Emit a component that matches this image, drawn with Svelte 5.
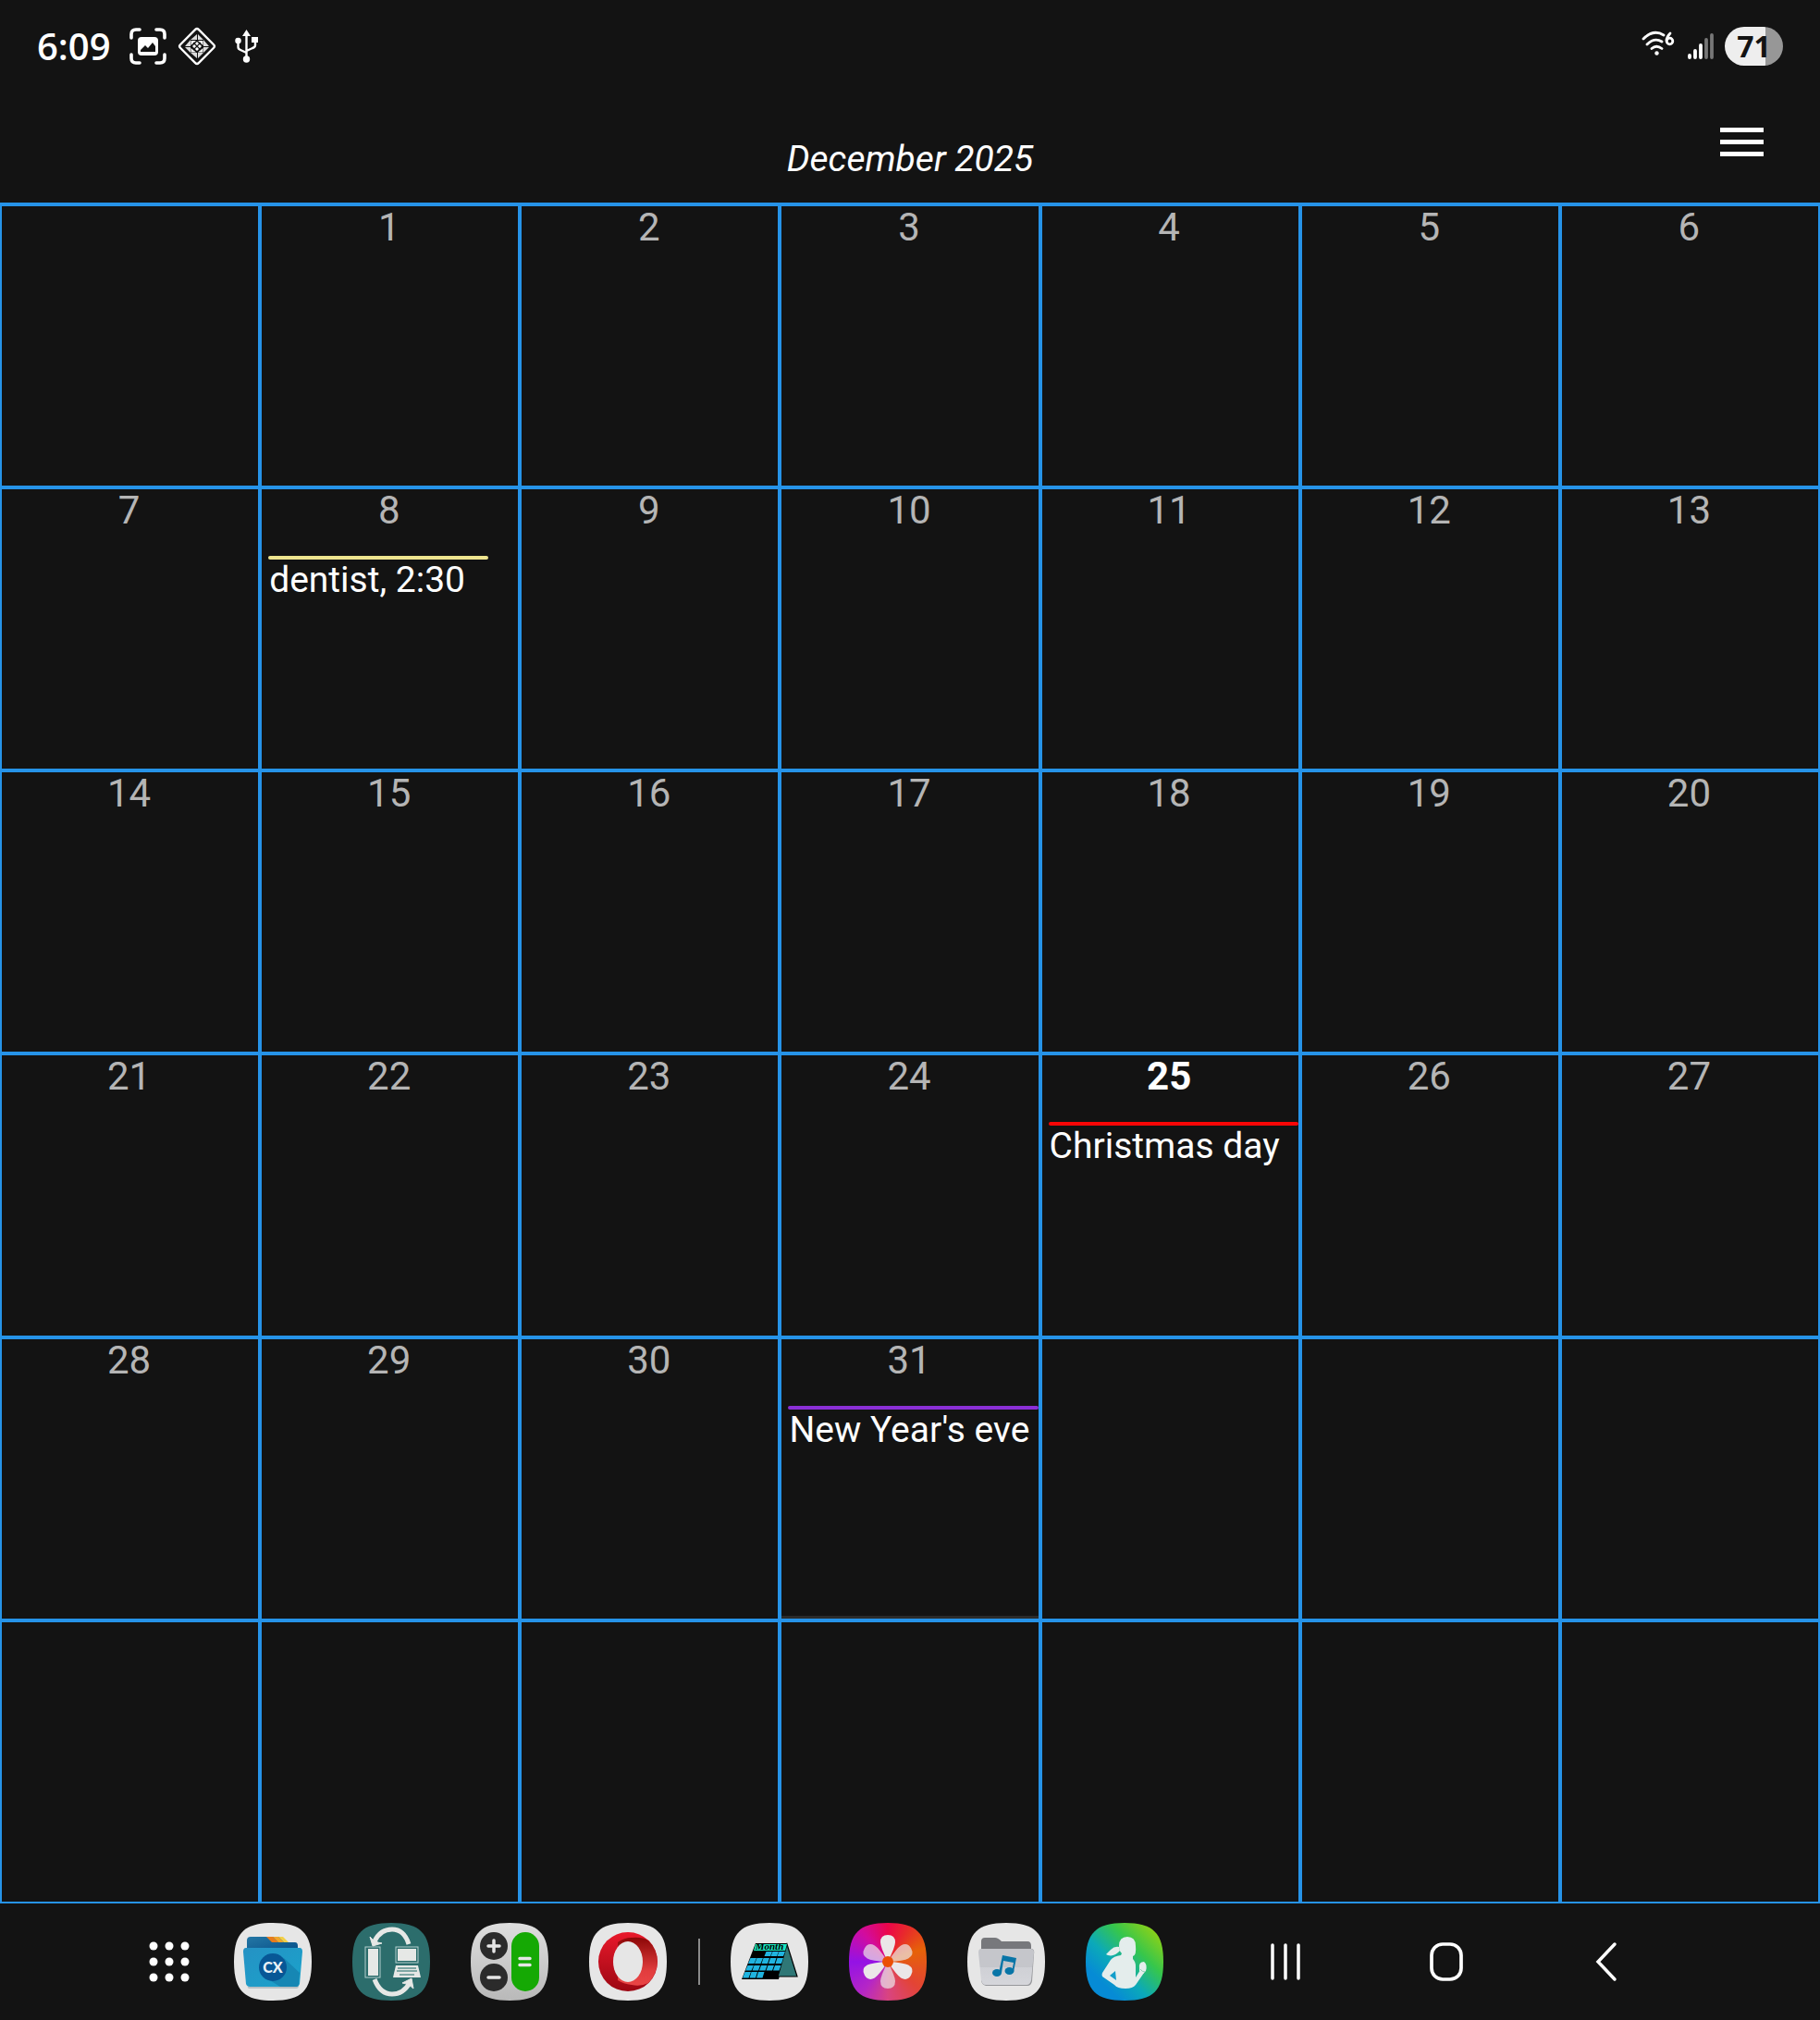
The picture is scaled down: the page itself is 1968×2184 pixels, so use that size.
<script lang="ts">
  interface CalendarEvent {
    title: string;
    color: string;
    span: number;
  }

  const TODAY = 25;
  const FIRST_WEEKDAY = 1;
  const DAYS_IN_MONTH = 31;

  const events: Record<number, CalendarEvent> = {
    8: { title: 'dentist, 2:30', color: '#eee58f', span: 88 },
    25: { title: 'Christmas day', color: '#f90606', span: 100 },
    31: { title: "New Year's eve", color: '#8a2fd6', span: 100 },
  };

  const cells = Array.from({ length: 42 }, (_, i) => {
    const day = i - FIRST_WEEKDAY + 1;
    return day >= 1 && day <= DAYS_IN_MONTH ? day : null;
  });

  const dots = [7, 24, 41];
  const squircle = 'M42 0C73 0 84 11 84 42S73 84 42 84 0 73 0 42 11 0 42 0Z';
</script>

<div class="screen">
  <div class="status-bar">
    <div class="status-left">
      <span class="clock">6:09</span>
      <svg width="40" height="40" viewBox="0 0 40 40" aria-hidden="true">
        <g fill="none" stroke="#fff" stroke-width="3.6" stroke-linecap="round">
          <path d="M2 11V7Q2 2 7 2H11M29 2H33Q38 2 38 7V11M38 29V33Q38 38 33 38H29M11 38H7Q2 38 2 33V29" />
        </g>
        <rect x="9" y="10" width="22" height="20" rx="4" fill="#fff" />
        <path d="M12 26V24L17 19L20 22L25 16L28 20V26Z" fill="#131313" />
      </svg>
      <svg width="42" height="42" viewBox="0 0 42 42" aria-hidden="true">
        <rect x="7" y="7" width="28" height="28" rx="2.5" transform="rotate(45 21 21)" fill="none" stroke="#fff" stroke-width="2.4" />
        <path
          d="M21 8V14H14ZM22 8L28 14H22ZM34 21H28V14ZM34 22L28 28V22ZM21 34L14 28H21ZM22 34V28H28ZM8 21L14 14V21ZM8 22H14V28Z"
          fill="#fff"
          opacity="0.85"
        />
        <path d="M14.500 15H20L14.500 20ZM22 15H27.500V20ZM14.500 23V27.500H20ZM22 27.500H27.500V23ZM21 16L26 21L21 26L16 21Z" fill="#fff" />
        <path d="M17 17L25 25M25 17L17 25" stroke="#131313" stroke-width="1.2" />
      </svg>
      <svg class="usb" width="26" height="36" viewBox="0 0 26 36" aria-hidden="true">
        <g fill="none" stroke="#fff" stroke-width="2.4">
          <path d="M12.500 5V32M3.500 13V19Q3.500 21 6 22L12.500 25M22 12V17Q22 19 19 20L12.500 23" />
        </g>
        <path d="M12.500 0L17 7H8ZM18 8H25V14H18Z" fill="#fff" />
        <circle cx="3.5" cy="12" r="3.3" fill="#fff" />
        <circle cx="12.5" cy="32" r="3.7" fill="#fff" />
      </svg>
    </div>
    <div class="status-right">
      <svg class="wifi" width="36" height="28" viewBox="0 0 36 28" aria-hidden="true">
        <g fill="none" stroke="#fff" stroke-width="2.8" stroke-linecap="round">
          <path d="M2 9Q13 -2 24 5M6 15Q14 7 22 12M11 19.500Q16 15 22 19.500" />
          <path d="M31 3Q27 7 27 11" />
          <circle cx="30.5" cy="11.5" r="3.3" />
        </g>
        <circle cx="16.5" cy="24.5" r="2.2" fill="#fff" />
      </svg>
      <svg class="signal" width="28" height="30" viewBox="0 0 28 30" aria-hidden="true">
        <g stroke-width="3.8" stroke-linecap="round">
          <path d="M2 25V27M8 20V27M14 14V27" stroke="#fff" />
          <path d="M20 8V27M26 3V27" stroke="#777" />
        </g>
      </svg>
      <span class="battery">71</span>
    </div>
  </div>

  <header class="header">
    <h1>December 2025</h1>
    <button class="menu-btn" aria-label="Menu">
      <span></span>
      <span></span>
      <span></span>
    </button>
  </header>

  <main class="month">
    {#each cells as day}
      <button class="day" class:today={day === TODAY} class:last={day === DAYS_IN_MONTH} aria-label={day ? undefined : 'Empty day'}>
        {#if day}
          <span class="number">{day}</span>
          {#if events[day]}
            <span class="event">
              <span class="bar" style:width="{events[day].span}%" style:background={events[day].color}></span>
              <span class="title">{events[day].title}</span>
            </span>
          {/if}
        {/if}
      </button>
    {/each}
  </main>

  <nav class="dock">
    <div class="apps">
      <button class="all-apps" aria-label="All apps">
        <svg width="48" height="48" viewBox="0 0 48 48">
          {#each dots as cy}
            {#each dots as cx}
              <circle {cx} {cy} r="4.5" fill="#fff" />
            {/each}
          {/each}
        </svg>
      </button>

      <button class="app" aria-label="Files">
        <svg width="84" height="84" viewBox="0 0 84 84">
          <defs>
            <linearGradient id="cx-front" x1="0" y1="0" x2="1" y2="1">
              <stop offset="0" stop-color="#2592c4" />
              <stop offset="1" stop-color="#1aa3cb" />
            </linearGradient>
            <linearGradient id="cx-back" x1="0" y1="0" x2="1" y2="1">
              <stop offset="0" stop-color="#2477a5" />
              <stop offset="1" stop-color="#064f89" />
            </linearGradient>
          </defs>
          <path d={squircle} fill="#e6e6e6" />
          <path d="M14 30V19Q14 15 18 15H52L58 21H66Q69 21 69 25V32H14Z" fill="url(#cx-back)" />
          <path d="M35 15H42L48 21H41Z" fill="#e87b1c" />
          <path d="M42 15H48L54 21H48Z" fill="#f2a62b" />
          <path d="M48 15H53L59 21H54Z" fill="#f2cf48" />
          <path d="M15 69Q14 71 18 71H67Q70 71 70 68Z" fill="#b8c0c4" />
          <path d="M13 27H71Q74 27 74 31L71 66Q70 69 67 69H17Q14 69 13 66L10 31Q10 27 13 27Z" fill="url(#cx-front)" />
          <path d="M54 38L71 54L70 66Q70 69 67 69H50L37 61Z" fill="#1687b4" />
          <circle cx="42" cy="48" r="15" fill="#075796" />
          <text x="42" y="54" class="cx-label">CX</text>
        </svg>
      </button>

      <button class="app" aria-label="File sync">
        <svg width="84" height="84" viewBox="0 0 84 84">
          <path d={squircle} fill="#2c6d6c" />
          <g fill="none" stroke="#e6e8e6" stroke-width="5">
            <path d="M61 23Q56 7 43 7Q30 7 24 20M24 61Q30 77 43 77Q55 77 62 65" />
          </g>
          <path d="M19 15L22 25L32 22Q24 21 19 15ZM54 65L64 60L66 71Q61 65 54 65Z" fill="#e6e8e6" stroke="#e6e8e6" />
          <rect x="14" y="26" width="16" height="33" fill="none" stroke="#b3cfcd" />
          <rect x="17" y="28" width="11" height="29" fill="#e6e8e6" />
          <rect x="47" y="26" width="24" height="17" fill="none" stroke="#b3cfcd" />
          <rect x="49" y="28" width="20" height="13" fill="#e6e8e6" />
          <path d="M47 46H71L74 59H44Z" fill="#e6e8e6" />
          <path d="M49 49H69M48 52H70M51 56H67" stroke="#5d918e" stroke-width="1.5" />
        </svg>
      </button>

      <button class="app" aria-label="Calculator">
        <svg width="84" height="84" viewBox="0 0 84 84">
          <defs>
            <linearGradient id="calc-bg" x1="0" y1="0" x2="0" y2="1">
              <stop offset="0" stop-color="#dedede" />
              <stop offset="1" stop-color="#b9b9b9" />
            </linearGradient>
          </defs>
          <path d={squircle} fill="url(#calc-bg)" />
          <circle cx="25" cy="25" r="15" fill="#2b2b2b" />
          <circle cx="25" cy="59" r="15" fill="#2b2b2b" />
          <rect x="44" y="10" width="30" height="64" rx="15" fill="#15a904" />
          <path d="M19 25H31M25 19V31M19 59H31M53 38.500H64M53 45.500H64" stroke="#e6e6e6" stroke-width="3.5" stroke-linecap="round" />
        </svg>
      </button>

      <button class="app" aria-label="Opera">
        <svg width="84" height="84" viewBox="0 0 84 84">
          <defs>
            <linearGradient id="opera-ring" x1="0" y1="0" x2="0" y2="1">
              <stop offset="0" stop-color="#e9192b" />
              <stop offset="1" stop-color="#9c0713" />
            </linearGradient>
            <linearGradient id="opera-side" x1="0" y1="0" x2="0" y2="1">
              <stop offset="0" stop-color="#8c0707" />
              <stop offset="0.7" stop-color="#e23d3e" />
              <stop offset="1" stop-color="#e94546" />
            </linearGradient>
          </defs>
          <path d={squircle} fill="#e6e6e6" />
          <circle cx="42" cy="42" r="32" fill="url(#opera-ring)" />
          <path d="M31 21Q38 16 46 16Q57 15 64 19A32 32 0 0 1 64 65Q56 69 46 67Q37 66 31 62Z" fill="url(#opera-side)" />
          <ellipse cx="42" cy="42" rx="16" ry="22" fill="#e6e6e6" />
        </svg>
      </button>

      <span class="divider"></span>

      <button class="app" aria-label="Month">
        <svg width="84" height="84" viewBox="0 0 84 84">
          <path d={squircle} fill="#e6e6e6" />
          <path d="M27 22H61L52 61H12Z" fill="#000" />
          <path d="M61 23L72 58H51Z" fill="#2f7776" stroke="#000" stroke-width="1.2" />
          <path d="M27 23H61L59 30H25Z" fill="#18e5bf" />
          <path
            d="M38.500 31H45L43 36H36.500ZM45.500 31H52L50 36H43.500ZM52.500 31H59L57 36H50.500ZM21.500 38H28L25.500 44H19ZM28.500 38H35L32.500 44H26ZM35.500 38H42L40 44H33.500ZM43 38H49.500L47.500 44H41ZM50.500 38H57L55 44H48.500ZM18.500 46H25L22.500 51.500H16ZM25.500 46H32L30 51.500H23.500ZM33 46H39.500L37.500 51.500H31ZM40.500 46H47L45 51.500H38.500ZM48 46H54.500L52.500 51.500H46ZM15.500 53H22L19.500 59.500H13ZM22.500 53H29L27 59.500H20.500ZM30 53H36.500L34.500 59.500H28Z"
            fill="#20b4e0"
          />
          <text x="42" y="29" class="month-label">Month</text>
        </svg>
      </button>

      <button class="app" aria-label="Gallery">
        <span class="gallery-bg">
          <svg width="84" height="84" viewBox="0 0 84 84">
            {#each [0, 60, 120, 180, 240, 300] as angle}
              <path
                d="M42 42Q34 26 34 21Q34 13 42 13T50 21Q50 26 42 42Z"
                transform="rotate({angle} 42 42)"
                fill="#ebe7e8"
                opacity={angle % 120 === 0 ? 1 : 0.7}
              />
            {/each}
            <circle cx="42" cy="42" r="6" fill="#eb4f05" />
          </svg>
        </span>
      </button>

      <button class="app" aria-label="Music folder">
        <svg width="84" height="84" viewBox="0 0 84 84">
          <defs>
            <linearGradient id="folder-front" x1="0" y1="0" x2="0" y2="1">
              <stop offset="0.5" stop-color="#c5c6cb" />
              <stop offset="0.5" stop-color="#cfd0d5" />
              <stop offset="1" stop-color="#d5d6db" />
            </linearGradient>
          </defs>
          <path d={squircle} fill="#e6e6e6" />
          <path d="M15 34V20Q15 16 19 16H30Q33 16 37 20H65Q69 20 69 25V34Z" fill="#77787c" />
          <path d="M16 28H70Q73 29 72 34L70 63Q69 68 65 68H20Q16 67 15 63Z" fill="#96979b" />
          <path d="M15 28H68Q72 28 72 32L69 62Q68 67 64 67H20Q16 67 15 62L12 32Q12 28 15 28Z" fill="url(#folder-front)" />
          <g fill="#0875a7">
            <ellipse cx="32" cy="54" rx="5" ry="4" />
            <ellipse cx="45.5" cy="52" rx="5" ry="4" />
            <path d="M38 35L53 38L50 53H48L50 43L39 41L37 54H34Z" />
          </g>
        </svg>
      </button>

      <button class="app" aria-label="Health">
        <svg width="84" height="84" viewBox="0 0 84 84">
          <defs>
            <linearGradient id="health-bg" x1="0.1" y1="0.9" x2="0.9" y2="0.1">
              <stop offset="0.15" stop-color="#068bd5" />
              <stop offset="0.4" stop-color="#0ba9b9" />
              <stop offset="0.7" stop-color="#36c64c" />
              <stop offset="1" stop-color="#8bd118" />
            </linearGradient>
          </defs>
          <path d={squircle} fill="url(#health-bg)" />
          <g fill="#e4edec">
            <path d="M36 25Q36 15 45 15Q54 15 54 25Q55 35 51 36V39Q54 42 54 47V59L59 51L63 54L54 67Q51 71 43 71Q34 71 31 67L18 58Q17 56 18 54L27 40Q30 36 38 35L39 33Q36 30 36 25Z" />
            <path d="M36 26L37 30Q31 37 24 35L22 34L27 29Q31 25 36 26Z" />
            <path d="M58 49Q57 42 63 42Q67 45 65 52L62 55L58 52Z" />
          </g>
          <path d="M32 52L33 62L26 57Z" fill="#129eca" />
          <path d="M59 50Q61 53 64 53" stroke="#8fcfb5" fill="none" />
        </svg>
      </button>
    </div>

    <div class="system">
      <button aria-label="Recents">
        <svg width="44" height="44" viewBox="0 0 44 44">
          <path d="M8 4V40M22 4V40M36 4V40" stroke="#fff" stroke-width="3.5" stroke-linecap="round" />
        </svg>
      </button>
      <button aria-label="Home">
        <svg width="44" height="44" viewBox="0 0 44 44">
          <rect x="6" y="3" width="32" height="38" rx="12" fill="none" stroke="#fff" stroke-width="3.7" />
        </svg>
      </button>
      <button aria-label="Back">
        <svg width="44" height="44" viewBox="0 0 44 44">
          <path d="M30 3L12 22L30 41" fill="none" stroke="#fff" stroke-width="3.5" stroke-linecap="round" />
        </svg>
      </button>
    </div>
  </nav>
</div>

<style>
  :global(body) {
    margin: 0;
    background: #131313;
  }

  .screen {
    min-height: 100vh;
    display: flex;
    flex-direction: column;
    background: #131313;
    color: #fff;
    font-family: Roboto, 'Liberation Sans', sans-serif;
  }

  button {
    padding: 0;
    border: 0;
    background: none;
    color: inherit;
    font: inherit;
    cursor: pointer;
  }

  svg {
    display: block;
  }

  .status-bar {
    height: 100px;
    padding: 0 40px;
    display: flex;
    align-items: center;
    justify-content: space-between;
  }

  .status-left,
  .status-right {
    display: flex;
    align-items: center;
  }

  .status-left {
    gap: 12px;
  }

  .clock {
    margin-right: 8px;
    font-family: 'Open Sans', sans-serif;
    font-size: 40px;
    font-weight: 600;
    line-height: 48px;
  }

  .usb {
    margin-left: 8px;
  }

  .wifi {
    margin: 0 14px 6px 0;
  }

  .signal {
    margin-right: 12px;
  }

  .battery {
    width: 63px;
    height: 42px;
    border-radius: 21px;
    background: linear-gradient(90deg, #eee 70%, #979797 70%);
    color: #131313;
    font-family: 'Open Sans', sans-serif;
    font-size: 32px;
    font-weight: 700;
    line-height: 42px;
    text-align: center;
  }

  .header {
    height: 119px;
    padding: 0 61px;
    display: grid;
    grid-template-columns: 1fr auto 1fr;
  }

  h1 {
    grid-column: 2;
    margin: 48px 0 0;
    font-size: 39px;
    font-style: italic;
    font-weight: 400;
    line-height: 48px;
  }

  .menu-btn {
    align-self: start;
    justify-self: end;
    width: 47px;
    margin-top: 38px;
    display: flex;
    flex-direction: column;
    gap: 8px;
  }

  .menu-btn span {
    height: 5px;
    background: #fff;
  }

  .month {
    flex: 1;
    display: grid;
    grid-template-columns: repeat(7, minmax(0, 1fr));
    grid-template-rows: repeat(6, minmax(0, 1fr));
    gap: 4px;
    padding: 4px 2px 2px;
    background: #2693e8;
  }

  .day {
    min-height: 120px;
    display: flex;
    flex-direction: column;
    justify-content: flex-start;
    background: #131313;
  }

  .day.last {
    border-bottom: 3px solid #2b2b2b;
  }

  .number {
    padding-right: 2px;
    color: #b5b5b5;
    font-size: 42px;
    line-height: 46px;
    text-align: center;
  }

  .today .number {
    color: #fff;
    font-weight: 700;
  }

  .event {
    margin-top: 26px;
    padding-left: 7px;
    display: flex;
    flex-direction: column;
    text-align: left;
  }

  .bar {
    height: 4px;
    border-radius: 2px;
  }

  .title {
    padding-left: 1px;
    font-size: 39px;
    line-height: 44px;
    white-space: nowrap;
  }

  .dock {
    height: 126px;
    padding: 0 208px 0 159px;
    display: flex;
    align-items: center;
    justify-content: space-between;
  }

  .apps {
    display: flex;
    align-items: center;
    gap: 44px;
  }

  .all-apps {
    margin-right: 2px;
  }

  .divider {
    width: 2px;
    height: 50px;
    margin: 0 -11px 0 -10px;
    background: #8a8a8a;
  }

  .cx-label {
    fill: #eaf1f5;
    font-family: Lato, sans-serif;
    font-size: 16px;
    font-weight: 900;
    text-anchor: middle;
  }

  .month-label {
    fill: #000;
    font-family: 'Liberation Serif', serif;
    font-size: 11px;
    font-style: italic;
    font-weight: 700;
    text-anchor: middle;
  }

  .gallery-bg {
    display: block;
    clip-path: path('M42 0C73 0 84 11 84 42S73 84 42 84 0 73 0 42 11 0 42 0Z');
    background: conic-gradient(#ec064a, #e8292c 30deg, #e66208 70deg, #e34435 130deg, #d94481 180deg, #b526c6 220deg, #9412e5 270deg, #d20c9e 320deg, #ec064a);
  }

  .system {
    display: flex;
    align-items: center;
    gap: 130px;
  }
</style>
